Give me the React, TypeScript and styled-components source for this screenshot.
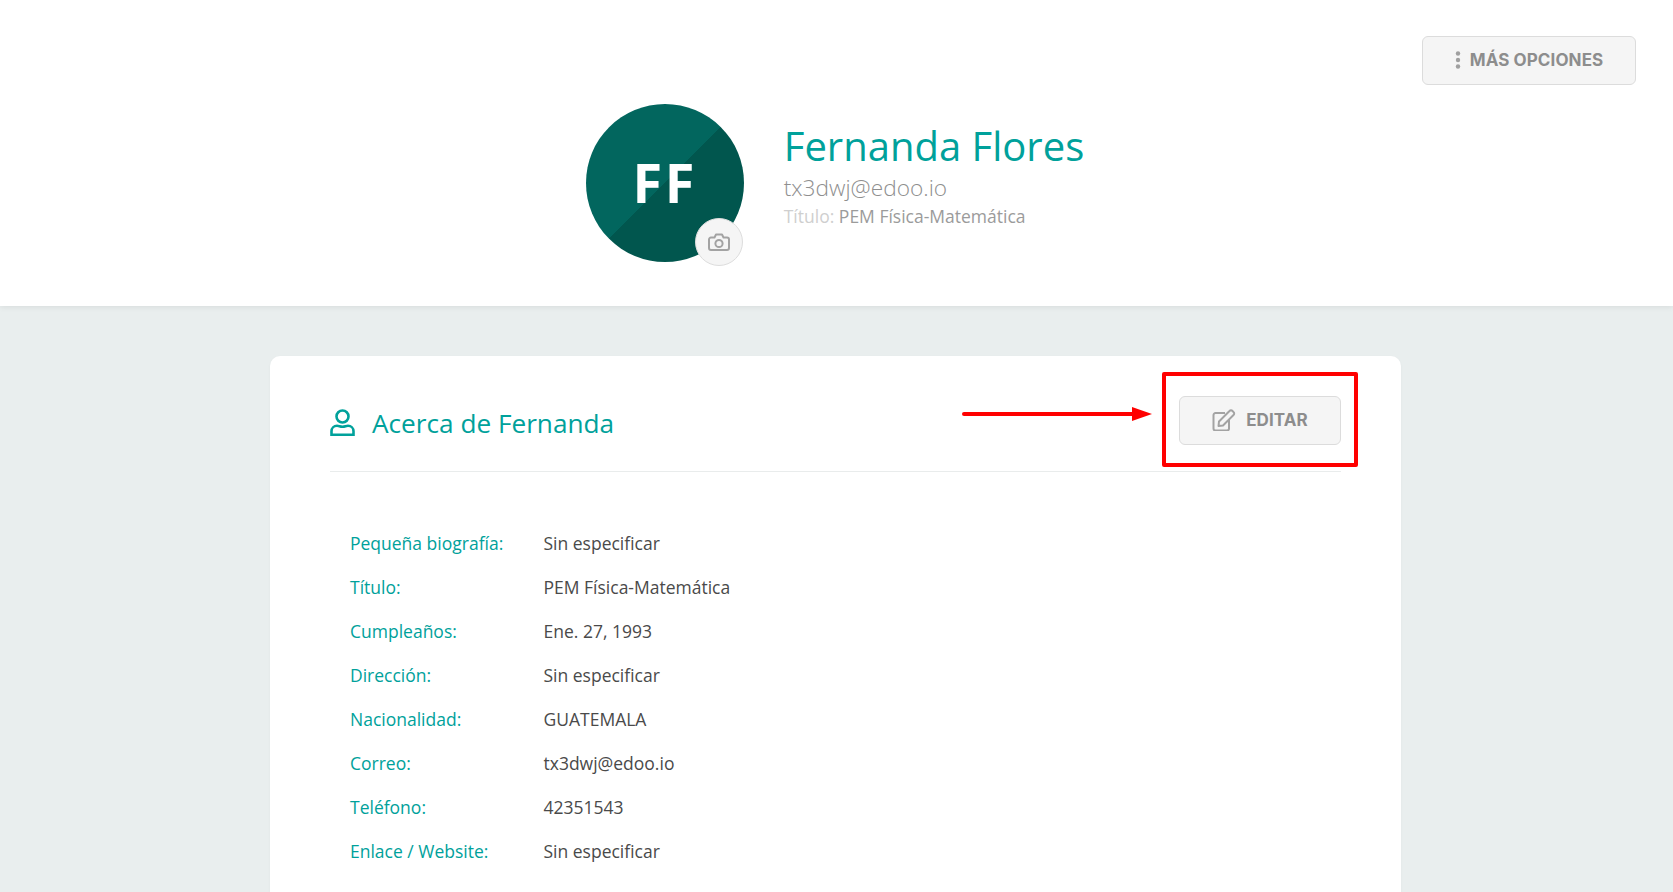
import React from 'react';
import styled, { createGlobalStyle } from 'styled-components';

const teal = '#00a19b';

const GlobalStyle = createGlobalStyle`
  html, body {
    margin: 0;
    height: 100%;
    overflow: hidden;
    background: #e9eeee;
    font-family: "Open Sans", sans-serif;
  }
`;

const Header = styled.header`
  display: grid;
  grid-template-columns: 1fr auto 1fr;
  height: 306px;
  box-sizing: border-box;
  padding-top: 36px;
  background: #fff;
  box-shadow: 0 1px 6px rgba(0, 0, 0, 0.08);
`;

const Profile = styled.div`
  grid-column: 2;
  display: flex;
  gap: 40px;
  padding: 68px 3px 0 0;
`;

const Avatar = styled.div`
  position: relative;
  width: 158px;
  height: 158px;
  padding-bottom: 3px;
  box-sizing: border-box;
  border-radius: 50%;
  display: flex;
  align-items: center;
  justify-content: center;
  background: linear-gradient(135deg, #02665e 50%, #01564e 50%);
  color: #fff;
  font-size: 54px;
  font-weight: 700;
  letter-spacing: 2.5px;
`;

const CameraButton = styled.div`
  position: absolute;
  right: 1px;
  bottom: -4px;
  width: 48px;
  height: 48px;
  box-sizing: border-box;
  border: 1px solid #ddd;
  border-radius: 50%;
  background: #f5f5f5;
  display: flex;
  align-items: center;
  justify-content: center;
`;

const Info = styled.div`
  display: flex;
  flex-direction: column;
`;

const Name = styled.h1`
  margin: 17px 0 0;
  font-size: 40px;
  line-height: 50px;
  font-weight: 400;
  color: ${teal};
`;

const Email = styled.div`
  margin-top: 2px;
  font-size: 22.7px;
  line-height: 30px;
  font-weight: 300;
  color: #8f8f8f;
`;

const Degree = styled.div`
  margin-top: 1px;
  font-size: 17.5px;
  line-height: 25px;
  color: #9b9b9b;

  span {
    color: #cfcfcf;
  }
`;

const Button = styled.button`
  display: inline-flex;
  align-items: center;
  justify-content: center;
  box-sizing: border-box;
  height: 49px;
  padding: 0 0 1px;
  border: 1px solid #dcdcdc;
  border-radius: 6px;
  background: #f5f5f5;
  color: #8d8d8d;
  font-family: "Inter", sans-serif;
  font-size: 17px;
  font-weight: 700;
  letter-spacing: 0.1px;
`;

const MoreButton = styled(Button)`
  grid-column: 3;
  justify-self: end;
  align-self: start;
  width: 214px;
  margin-right: 37px;
  gap: 9px;
`;

const Page = styled.main`
  padding: 50px 272px 0 270px;
`;

const Card = styled.section`
  background: #fff;
  border-radius: 10px;
  padding: 0 60px 40px;
  box-shadow: 0 1px 3px rgba(0, 0, 0, 0.04);
`;

const CardHeader = styled.div`
  display: flex;
  align-items: center;
  justify-content: space-between;
  height: 115px;
  border-bottom: 1px solid #e9ecec;
`;

const CardTitle = styled.h2`
  display: flex;
  align-items: center;
  gap: 17px;
  margin: 18px 0 0;
  font-size: 26.2px;
  font-weight: 400;
  color: ${teal};
`;

const EditWrap = styled.div`
  position: relative;
  margin-top: 14px;
`;

const EditButton = styled(Button)`
  width: 162px;
  gap: 10px;
`;

const Highlight = styled.div`
  position: absolute;
  inset: -24px -17px -22px;
  border: 4px solid #f00;
  border-radius: 2px;
`;

const Arrow = styled.svg`
  position: absolute;
  left: -217px;
  top: 11px;
`;

const Details = styled.dl`
  display: grid;
  grid-template-columns: 193.5px 1fr;
  grid-auto-rows: 44px;
  align-items: center;
  margin: 49px 0 0;
  padding-left: 20px;
  font-size: 17.5px;
`;

const Label = styled.dt`
  color: ${teal};
`;

const Value = styled.dd`
  margin: 0;
  color: #4a4a4a;
`;

const rows: [string, string][] = [
  ['Pequeña biografía:', 'Sin especificar'],
  ['Título:', 'PEM Física-Matemática'],
  ['Cumpleaños:', 'Ene. 27, 1993'],
  ['Dirección:', 'Sin especificar'],
  ['Nacionalidad:', 'GUATEMALA'],
  ['Correo:', 'tx3dwj@edoo.io'],
  ['Teléfono:', '42351543'],
  ['Enlace / Website:', 'Sin especificar'],
];

const App: React.FunctionComponent = () => {
  return (
    <>
      <GlobalStyle />
      <Header>
        <Profile>
          <Avatar>
            FF
            <CameraButton>
              <svg width="22" height="18" viewBox="0 0 22 18" fill="none" stroke="#a3a3a3" strokeWidth="2" strokeLinejoin="round">
                <path d="M3 4.500h3.500L8 1.500h6l1.500 3H19a2 2 0 0 1 2 2V15a2 2 0 0 1-2 2H3a2 2 0 0 1-2-2V6.500a2 2 0 0 1 2-2z" />
                <circle cx="11" cy="10.500" r="3.600" />
              </svg>
            </CameraButton>
          </Avatar>
          <Info>
            <Name>Fernanda Flores</Name>
            <Email>tx3dwj@edoo.io</Email>
            <Degree>
              <span>Título:</span> PEM Física-Matemática
            </Degree>
          </Info>
        </Profile>
        <MoreButton>
          <svg width="6" height="18" viewBox="0 0 6 18" fill="#a0a0a0">
            <circle cx="3" cy="2.500" r="2.200" />
            <circle cx="3" cy="9" r="2.200" />
            <circle cx="3" cy="15.500" r="2.200" />
          </svg>
          MÁS OPCIONES
        </MoreButton>
      </Header>
      <Page>
        <Card>
          <CardHeader>
            <CardTitle>
              <svg width="25" height="27" viewBox="0 0 25 27" fill="none" stroke={teal} strokeWidth="2.600">
                <circle cx="12.500" cy="7.500" r="6" />
                <path d="M1.500 25.700v-3.400c0-3.200 2.500-5.500 5.500-5.500 2 0 3 1 5.500 1s3.500-1 5.500-1c3 0 5.500 2.300 5.500 5.500v3.400z" />
              </svg>
              Acerca de Fernanda
            </CardTitle>
            <EditWrap>
              <EditButton>
                <svg width="24" height="22" viewBox="0 0 24 22" fill="none" stroke="#a3a3a3" strokeWidth="2" strokeLinejoin="round">
                  <path d="M13 4H3.500a2 2 0 0 0-2 2v13.500a2 2 0 0 0 2 2H15a2 2 0 0 0 2-2V11" />
                  <path d="M7 12.500 17.500 2a2 2 0 0 1 3 0l1 1a2 2 0 0 1 0 3L11 16.500l-4.500.5z" />
                </svg>
                EDITAR
              </EditButton>
              <Highlight />
              <Arrow width="190" height="14" viewBox="0 0 190 14">
                <path d="M2 7h170" stroke="#f00" strokeWidth="4" strokeLinecap="round" />
                <path d="M170 0l20 7-20 7z" fill="#f00" />
              </Arrow>
            </EditWrap>
          </CardHeader>
          <Details>
            {rows.map(([label, value]) => (
              <React.Fragment key={label}>
                <Label>{label}</Label>
                <Value>{value}</Value>
              </React.Fragment>
            ))}
          </Details>
        </Card>
      </Page>
    </>
  );
};

export default App;
